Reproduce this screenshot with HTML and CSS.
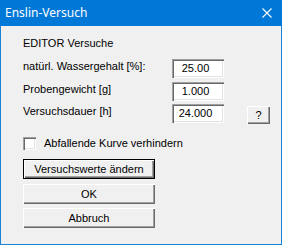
FILE: index.html
```html
<!DOCTYPE html>
<html lang="de">
<head>
<meta charset="utf-8">
<title>Enslin-Versuch</title>
<link rel="stylesheet" href="styles.css">
</head>
<body>
<div class="window">
  <div class="titlebar">
    <span class="title">Enslin-Versuch</span>
    <svg class="close" width="10" height="10" viewBox="0 0 10 10"><path d="M0.5 0.5 L9.5 9.5 M9.5 0.5 L0.5 9.5" stroke="#fff" stroke-width="1.1" fill="none"/></svg>
  </div>
  <div class="content">
    <div class="heading">EDITOR Versuche</div>
    <div class="form">
      <div class="label">natürl. Wassergehalt [%]:</div>
      <div class="field">25.00</div>
      <div></div>
      <div class="label">Probengewicht [g]</div>
      <div class="field">1.000</div>
      <div></div>
      <div class="label">Versuchsdauer [h]</div>
      <div class="field">24.000</div>
      <div class="btn help">?</div>
    </div>
    <div class="check"><span class="box"></span><span class="check-label">Abfallende Kurve verhindern</span></div>
    <div class="buttons">
      <div class="btn wide default">Versuchswerte ändern</div>
      <div class="btn wide">OK</div>
      <div class="btn wide">Abbruch</div>
    </div>
  </div>
</div>
</body>
</html>
```
FILE: styles.css
```css
html, body {
  margin: 0;
  padding: 0;
  background: #ffffff;
}
.window {
  width: 282px;
  height: 245px;
  box-sizing: border-box;
  border: 1px solid #1883d7;
  border-top: none;
  background: #f0f0f0;
  font-family: "Liberation Sans", Arial, sans-serif;
  font-size: 11px;
  color: #000;
}
.titlebar {
  height: 26px;
  margin: 0 -1px;
  background: #0078d7;
  display: flex;
  align-items: center;
  justify-content: space-between;
  padding: 0 10px 0 5px;
}
.title {
  color: #fff;
  font-family: "Noto Sans", "Open Sans", sans-serif;
  font-size: 12px;
  line-height: 16px;
}
.close {
  display: block;
}
.content {
  padding: 11px 0 0 21px;
}
.heading {
  line-height: 13px;
  padding-left: 1px;
}
.form {
  margin-top: 9px;
  display: grid;
  grid-template-columns: 150px 75px 23px;
  row-gap: 3.5px;
  grid-auto-rows: 19px;
}
.label {
  line-height: 13px;
  padding-top: 1px;
  padding-left: 1px;
  white-space: nowrap;
}
.field {
  width: 52px;
  background: #fff;
  box-shadow: inset 1px 1px 0 #a0a0a0, inset 2px 2px 0 #696969, inset -1px -1px 0 #fff, inset -2px -2px 0 #e3e3e3;
  line-height: 19px;
  text-align: center;
  padding-right: 5px;
  box-sizing: border-box;
}
.btn {
  background: #f0f0f0;
  box-shadow: inset 1px 1px 0 #fff, inset -1px -1px 0 #696969, inset -2px -2px 0 #a0a0a0;
  text-align: center;
  box-sizing: border-box;
}
.help {
  margin-top: 2px;
  height: 18px;
  line-height: 18px;
}
.check {
  margin-top: 14px;
  display: flex;
  align-items: center;
  gap: 8px;
  padding-left: 1px;
}
.box {
  width: 13px;
  height: 13px;
  box-sizing: border-box;
  background: #fff;
  box-shadow: inset 1px 1px 0 #a0a0a0, inset 2px 2px 0 #696969, inset -1px -1px 0 #fff, inset -2px -2px 0 #e3e3e3;
}
.check-label {
  line-height: 13px;
}
.buttons {
  margin-top: 9px;
  display: flex;
  flex-direction: column;
  gap: 4.5px;
  padding-left: 1px;
}
.wide {
  width: 132px;
  height: 20px;
  line-height: 20px;
}
.default {
  box-shadow: inset 0 0 0 1px #000, inset 2px 2px 0 #fff, inset -2px -2px 0 #696969, inset -3px -3px 0 #a0a0a0;
}
```
